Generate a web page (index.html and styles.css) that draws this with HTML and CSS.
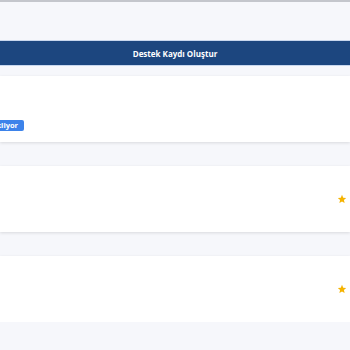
FILE: index.html
```html
<!DOCTYPE html>
<html lang="tr">
<head>
  <meta charset="UTF-8">
  <meta name="viewport" content="width=device-width, initial-scale=1.0">
  <title>Destek</title>
  <link rel="stylesheet" href="styles.css">
</head>
<body>
  <div class="topline"></div>

  <div class="create-bar">Destek Kaydı Oluştur</div>

  <div class="ticket">
    <div class="ticket-inner">
      <span class="status">Bekliyor</span>
    </div>
  </div>

  <div class="ticket rated">
    <svg class="star" viewBox="0 0 24 24" width="10" height="10">
      <path d="M12 2l2.9 6.9 7.1.6-5.4 4.7 1.7 7.3L12 17.8 5.7 21.5l1.7-7.3L2 9.5l7.1-.6z" fill="#f5b301"/>
    </svg>
  </div>

  <div class="ticket rated">
    <svg class="star" viewBox="0 0 24 24" width="10" height="10">
      <path d="M12 2l2.9 6.9 7.1.6-5.4 4.7 1.7 7.3L12 17.8 5.7 21.5l1.7-7.3L2 9.5l7.1-.6z" fill="#f5b301"/>
    </svg>
  </div>
</body>
</html>
```

FILE: styles.css
```css
body, html {
  margin: 0;
  padding: 0;
  font-family: "Open Sans", Arial, sans-serif;
  background-color: #f6f7fb;
  overflow: hidden;
}

.topline {
  height: 2px;
  background-color: #c4c6cc;
}

.create-bar {
  margin-top: 38px;
  height: 24px;
  background-color: #1c467f;
  border-top: 1px solid #c8d7ee;
  border-bottom: 1px solid #c8d7ee;
  color: #fff;
  font-size: 8px;
  font-weight: 700;
  display: flex;
  align-items: center;
  justify-content: center;
}

.ticket {
  height: 66px;
  margin-top: 24px;
  background-color: #fff;
  box-shadow: 0 1px 3px rgba(0, 0, 0, 0.12);
}

.create-bar + .ticket {
  margin-top: 10px;
}

.ticket-inner {
  display: flex;
  padding-top: 44px;
  margin-left: -19px;
}

.status {
  background-color: #3d83ea;
  color: #fff;
  font-size: 7.5px;
  font-weight: 700;
  padding: 0 6px;
  height: 11px;
  line-height: 11px;
  border-radius: 2px;
}

.rated {
  display: flex;
  align-items: center;
  justify-content: flex-end;
  padding-right: 3px;
}
```
